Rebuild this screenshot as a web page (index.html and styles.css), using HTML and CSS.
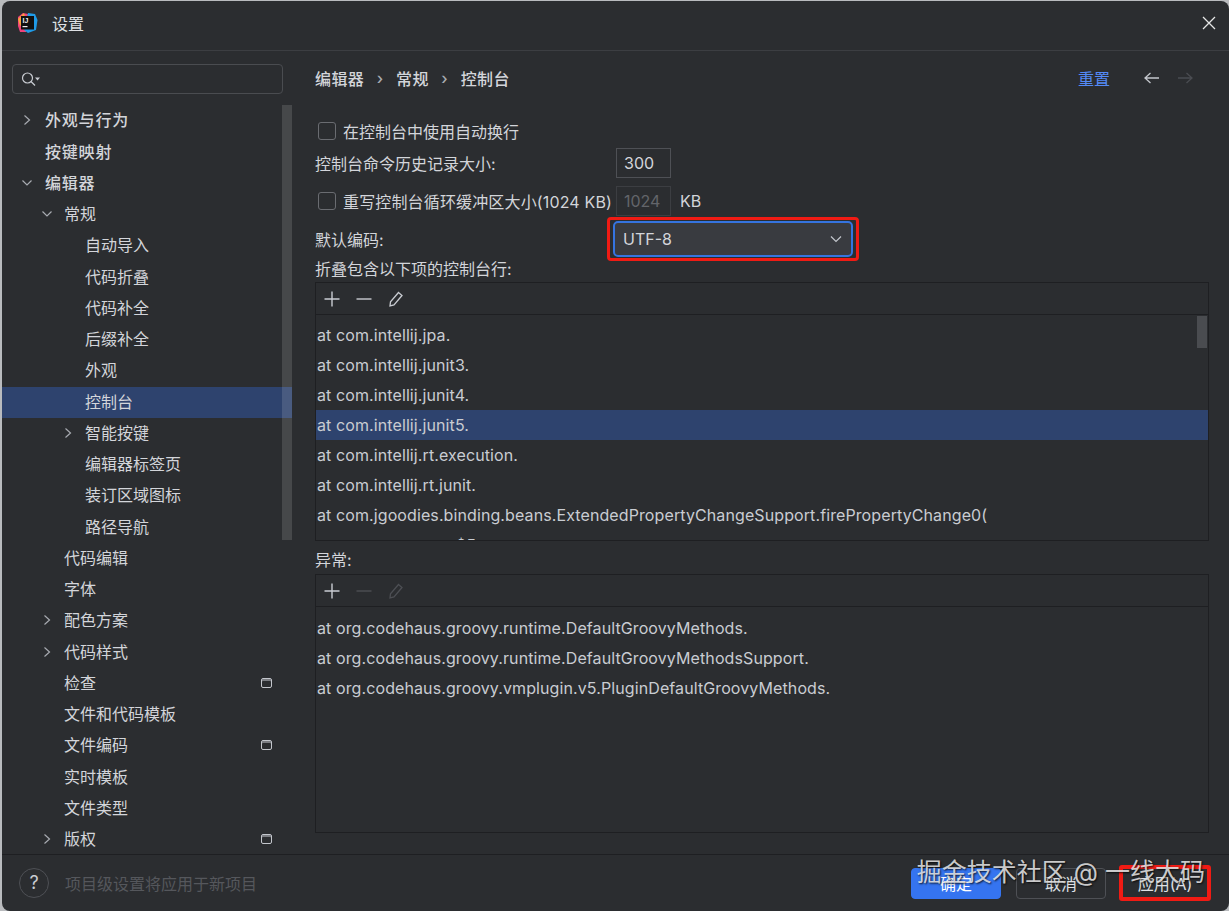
FILE: index.html
```html
<!DOCTYPE html>
<html lang="zh-CN">
<head>
  <meta charset="UTF-8" />
  <title>设置</title>
  <link rel="stylesheet" href="styles.css">
</head>
<body>
  <div class="dialog">

    <header class="titlebar">
      <svg class="logo" width="22" height="22" viewBox="0 0 22 22">
        <path d="M2 5 L7 1 L12 2 L10 20 L4 20 L2 14 Z" fill="#f0427a"/>
        <path d="M2 7 L8 1 L10 9 L4 14 Z" fill="#f7a23a"/>
        <path d="M12 1 L19 2 L21.500 8 L20 18 L12 21 L8 18 Z" fill="#1f9be8"/>
        <rect x="5" y="4" width="13" height="13.500" fill="#111"/>
        <text x="6.500" y="11" class="logo-text">IJ</text>
        <rect x="6.500" y="14" width="5" height="1.200" fill="#eee"/>
      </svg>
      <span class="title">设置</span>
      <svg class="close" width="14" height="14" viewBox="0 0 14 14">
        <path d="M1 1 L13 13 M13 1 L1 13" stroke="#e6e6e6" stroke-width="1.300" fill="none"/>
      </svg>
    </header>

    <div class="content">
      <aside class="sidebar">
        <div class="search">
          <svg width="22" height="18" viewBox="0 0 22 18">
            <circle cx="7.500" cy="8" r="5" stroke="#c9ccd2" stroke-width="1.200" fill="none"/>
            <path d="M11 11.500 L15 15.500" stroke="#c9ccd2" stroke-width="1.200"/>
            <path d="M15 7.500 H20 L17.500 10.500 Z" fill="#c9ccd2"/>
          </svg>
        </div>
        <div class="tree-wrap">
          <ul class="tree">
            <li class="row top"><svg class="arrow" viewBox="0 0 10 12"><path d="M2.500 1.500 L7.500 6 L2.500 10.500"/></svg>外观与行为</li>
            <li class="row top">按键映射</li>
            <li class="row top"><svg class="arrow" viewBox="0 0 12 10"><path d="M1.500 2.500 L6 7 L10.500 2.500"/></svg>编辑器</li>
            <li class="row lvl2"><svg class="arrow" viewBox="0 0 12 10"><path d="M1.500 2.500 L6 7 L10.500 2.500"/></svg>常规</li>
            <li class="row lvl3">自动导入</li>
            <li class="row lvl3">代码折叠</li>
            <li class="row lvl3">代码补全</li>
            <li class="row lvl3">后缀补全</li>
            <li class="row lvl3">外观</li>
            <li class="row lvl3 selected">控制台</li>
            <li class="row lvl3"><svg class="arrow" viewBox="0 0 10 12"><path d="M2.500 1.500 L7.500 6 L2.500 10.500"/></svg>智能按键</li>
            <li class="row lvl3">编辑器标签页</li>
            <li class="row lvl3">装订区域图标</li>
            <li class="row lvl3">路径导航</li>
            <li class="row lvl2">代码编辑</li>
            <li class="row lvl2">字体</li>
            <li class="row lvl2"><svg class="arrow" viewBox="0 0 10 12"><path d="M2.500 1.500 L7.500 6 L2.500 10.500"/></svg>配色方案</li>
            <li class="row lvl2"><svg class="arrow" viewBox="0 0 10 12"><path d="M2.500 1.500 L7.500 6 L2.500 10.500"/></svg>代码样式</li>
            <li class="row lvl2">检查<span class="badge"></span></li>
            <li class="row lvl2">文件和代码模板</li>
            <li class="row lvl2">文件编码<span class="badge"></span></li>
            <li class="row lvl2">实时模板</li>
            <li class="row lvl2">文件类型</li>
            <li class="row lvl2"><svg class="arrow" viewBox="0 0 10 12"><path d="M2.500 1.500 L7.500 6 L2.500 10.500"/></svg>版权<span class="badge"></span></li>
          </ul>
          <div class="tree-scroll"></div>
        </div>
      </aside>

      <main class="panel">
        <div class="crumbs">
          <span>编辑器</span><span class="sep">›</span><span>常规</span><span class="sep">›</span><span>控制台</span>
          <a class="reset">重置</a>
          <svg class="nav" width="18" height="14" viewBox="0 0 18 14"><path d="M16 7 H2 M7.500 2 L2 7 L7.500 12" stroke="#c3c6cc" stroke-width="1.300" fill="none"/></svg>
          <svg class="nav next" width="18" height="14" viewBox="0 0 18 14"><path d="M2 7 H16 M10.500 2 L16 7 L10.500 12" stroke="#4a4c51" stroke-width="1.300" fill="none"/></svg>
        </div>

        <div class="form-row row-wrap"><span class="check"></span>在控制台中使用自动换行</div>
        <div class="form-row row-history">
          <span class="label">控制台命令历史记录大小:</span>
          <span class="field">300</span>
        </div>
        <div class="form-row row-buffer">
          <span class="label check-label"><span class="check"></span>重写控制台循环缓冲区大小(1024 KB)</span>
          <span class="field disabled">1024</span>
          <span class="unit">KB</span>
        </div>
        <div class="form-row row-encoding">
          <span class="label">默认编码:</span>
          <span class="annot">
            <span class="combo">UTF-8
              <svg width="12" height="8" viewBox="0 0 12 8"><path d="M1 1.500 L6 6.500 L11 1.500" stroke="#c3c6cc" stroke-width="1.200" fill="none"/></svg>
            </span>
          </span>
        </div>
        <div class="form-row row-fold">折叠包含以下项的控制台行:</div>

        <section class="list list-fold">
          <div class="toolbar">
            <svg width="18" height="18" viewBox="0 0 18 18"><path d="M9 1.500 V16.500 M1.500 9 H16.500" stroke="#c9ccd2" stroke-width="1.400"/></svg>
            <svg width="18" height="18" viewBox="0 0 18 18"><path d="M1.500 9 H16.500" stroke="#c9ccd2" stroke-width="1.400"/></svg>
            <svg width="18" height="18" viewBox="0 0 18 18"><path d="M11.500 2.500 L15 5.500 L7 15 L3 16 L3.500 11.800 Z" stroke="#c9ccd2" stroke-width="1.300" fill="none"/></svg>
          </div>
          <ul class="items">
            <li>at com.intellij.jpa.</li>
            <li>at com.intellij.junit3.</li>
            <li>at com.intellij.junit4.</li>
            <li class="active">at com.intellij.junit5.</li>
            <li>at com.intellij.rt.execution.</li>
            <li>at com.intellij.rt.junit.</li>
            <li>at com.jgoodies.binding.beans.ExtendedPropertyChangeSupport.firePropertyChange0(</li>
            <li class="clipped">$5</li>
          </ul>
          <div class="list-scroll"></div>
        </section>

        <div class="form-row row-exc">异常:</div>

        <section class="list list-exc">
          <div class="toolbar">
            <svg width="18" height="18" viewBox="0 0 18 18"><path d="M9 1.500 V16.500 M1.500 9 H16.500" stroke="#c9ccd2" stroke-width="1.400"/></svg>
            <svg width="18" height="18" viewBox="0 0 18 18"><path d="M1.500 9 H16.500" stroke="#4d4f54" stroke-width="1.400"/></svg>
            <svg width="18" height="18" viewBox="0 0 18 18"><path d="M11.500 2.500 L15 5.500 L7 15 L3 16 L3.500 11.800 Z" stroke="#4d4f54" stroke-width="1.300" fill="none"/></svg>
          </div>
          <ul class="items">
            <li>at org.codehaus.groovy.runtime.DefaultGroovyMethods.</li>
            <li>at org.codehaus.groovy.runtime.DefaultGroovyMethodsSupport.</li>
            <li>at org.codehaus.groovy.vmplugin.v5.PluginDefaultGroovyMethods.</li>
          </ul>
        </section>
      </main>
    </div>

    <footer class="footer">
      <span class="help">?</span>
      <span class="hint">项目级设置将应用于新项目</span>
      <div class="buttons">
        <button class="btn primary">确定</button>
        <button class="btn">取消</button>
        <button class="btn apply">应用(A)</button>
      </div>
    </footer>

    <div class="watermark">掘金技术社区 @ 一线大码</div>
  </div>
</body>
</html>
```

FILE: styles.css
```css
* {
  box-sizing: border-box;
}

html, body {
  margin: 0;
  padding: 0;
  height: 911px;
  overflow: hidden;
  background: #b9bbbe;
}

body {
  font-family: Inter, "Noto Sans CJK SC", sans-serif;
  font-size: 16px;
  color: #d3d5da;
}

ul {
  list-style: none;
  margin: 0;
  padding: 0;
}

.dialog {
  position: relative;
  display: flex;
  flex-direction: column;
  width: 1227px;
  height: 910px;
  margin: 1px 0 0 2px;
  background: #2b2d30;
  border-radius: 8px;
}

/* title bar */
.titlebar {
  display: flex;
  align-items: center;
  height: 50px;
  flex-shrink: 0;
  padding: 0 13px 5px 14px;
  border-bottom: 1px solid #3c3e42;
}

.logo-text {
  font-family: "Liberation Sans", sans-serif;
  font-size: 7px;
  font-weight: bold;
  fill: #eee;
}

.title {
  margin-left: 14px;
  color: #dfe1e5;
}

.close {
  margin-left: auto;
}

.content {
  display: flex;
  flex: 1;
  min-height: 0;
}

/* left tree */
.sidebar {
  width: 290px;
  flex-shrink: 0;
  display: flex;
  flex-direction: column;
}

.search {
  display: flex;
  align-items: center;
  width: 271px;
  height: 30px;
  margin: 13px 0 0 10px;
  padding-left: 7px;
  border: 1px solid #4a4c50;
  border-radius: 4px;
}

.tree-wrap {
  position: relative;
  flex: 1;
  min-height: 0;
  margin-top: 11px;
  overflow: hidden;
}

.tree {
  padding-top: 0.4px;
}

.row {
  position: relative;
  height: 31.25px;
  line-height: 31px;
  white-space: nowrap;
  color: #d3d5da;
}

.row.top {
  padding-left: 43px;
  letter-spacing: 0.8px;
  font-weight: 500;
}

.row.lvl2 {
  padding-left: 62px;
}

.row.lvl3 {
  padding-left: 83px;
}

.row.selected {
  background: #2e436e;
}

.arrow {
  position: absolute;
  top: 9px;
  width: 12px;
  height: 12px;
  fill: none;
  stroke: #a8abb1;
  stroke-width: 1.200;
}

.row.top .arrow {
  left: 19px;
}

.row.lvl2 .arrow {
  left: 39px;
}

.row.lvl3 .arrow {
  left: 60px;
}

.badge {
  position: absolute;
  right: 20px;
  top: 10px;
  width: 11px;
  height: 10px;
  border: 1px solid #c3c6cc;
  border-radius: 2px;
  box-shadow: inset 0 2px 0 #7b7d82;
}

.tree-scroll {
  position: absolute;
  right: 0;
  top: 0;
  width: 10px;
  height: 435px;
  background: rgba(255, 255, 255, 0.13);
}

/* right panel */
.panel {
  flex: 1;
  min-width: 0;
  padding: 0 20px 0 23px;
}

.crumbs {
  display: flex;
  align-items: center;
  height: 56px;
  font-weight: 500;
  padding-bottom: 3px;
  letter-spacing: 0.4px;
}

.sep {
  margin: 0 12.5px;
  color: #a8abb1;
}

.reset {
  margin-left: auto;
  margin-right: 33px;
  color: #548af7;
  font-weight: 400;
  letter-spacing: 0;
}

.nav {
  margin-right: 15px;
}

.nav.next {
  margin-right: 15px;
}

.form-row {
  display: flex;
  align-items: center;
  height: 30px;
  white-space: nowrap;
}

.row-wrap {
  margin-top: 9px;
  padding-left: 3px;
}

.check {
  width: 18px;
  height: 18px;
  margin-right: 7px;
  flex-shrink: 0;
  border: 1px solid #6a6c71;
  border-radius: 3px;
}

.label {
  display: inline-flex;
  align-items: center;
  width: 301px;
  flex-shrink: 0;
}

.check-label {
  padding-left: 3px;
  letter-spacing: 0.15px;
}

.row-history {
  margin-top: 2px;
}

.field {
  display: block;
  width: 55px;
  height: 30px;
  line-height: 28px;
  padding-left: 7px;
  border: 1px solid #4e5055;
}

.field.disabled {
  color: #63656a;
  border-color: #3c3e42;
}

.unit {
  margin-left: 9px;
}

.row-buffer {
  margin-top: 8px;
}

.row-encoding {
  margin-top: 8px;
}

.annot {
  display: block;
  margin-left: -9px;
  padding: 1px 3px 1px 3px;
  border: 3px solid #f01b14;
  border-radius: 4px;
}

.combo {
  display: flex;
  align-items: center;
  justify-content: space-between;
  width: 240px;
  height: 36px;
  padding: 0 9px 0 8px;
  background: #393b40;
  border: 2px solid #3574e0;
  border-radius: 5px;
}

.row-fold {
  margin-top: -1px;
  height: 29px;
}

.list {
  position: relative;
  background: #2b2d30;
  border: 1px solid #1e1f22;
  overflow: hidden;
}

.list-fold {
  height: 259px;
}

.list-exc {
  height: 259px;
}

.toolbar {
  display: flex;
  align-items: center;
  gap: 14px;
  height: 32px;
  padding-left: 7px;
  border-bottom: 1px solid #1e1f22;
}

.items {
  padding-top: 5px;
}

.list-exc .items {
  padding-top: 6px;
}

.items li {
  height: 30px;
  line-height: 30px;
  padding-left: 1px;
  white-space: nowrap;
  font-size: 16px;
  letter-spacing: 0.1px;
  color: #c9ccd2;
}

.items li.active {
  background: #2e436e;
}

.items li.clipped {
  padding-left: 140px;
}

.list-scroll {
  position: absolute;
  right: 1px;
  top: 33px;
  width: 10px;
  height: 32px;
  background: #4a4c50;
}

.row-exc {
  margin-top: 3px;
}

/* footer */
.footer {
  display: flex;
  align-items: center;
  height: 57px;
  flex-shrink: 0;
  padding: 0 18px 0 17px;
  border-top: 1px solid #1e1f22;
}

.help {
  width: 30px;
  height: 30px;
  line-height: 28px;
  text-align: center;
  border: 1px solid #4e5055;
  border-radius: 50%;
  font-size: 18px;
  color: #c9ccd2;
}

.hint {
  margin-left: 16px;
  color: #55575c;
}

.buttons {
  display: flex;
  align-items: center;
  gap: 15px;
  margin-left: auto;
}

.btn {
  width: 90px;
  height: 31px;
  font: inherit;
  color: #dfe1e5;
  background: transparent;
  border: 1px solid #4e5055;
  border-radius: 4px;
}

.btn.primary {
  background: #3574f0;
  border-color: #3574f0;
  color: #fff;
}

.btn.apply {
  width: 92px;
  height: 36px;
  margin-left: -2px;
  border: 4px solid #f01b14;
  border-radius: 3px;
}

.watermark {
  position: absolute;
  right: 24px;
  top: 854px;
  font-size: 25px;
  line-height: 34px;
  white-space: nowrap;
  color: rgba(235, 235, 235, 0.85);
  text-shadow: 1px 1px 2px rgba(0, 0, 0, 0.8);
}
```
